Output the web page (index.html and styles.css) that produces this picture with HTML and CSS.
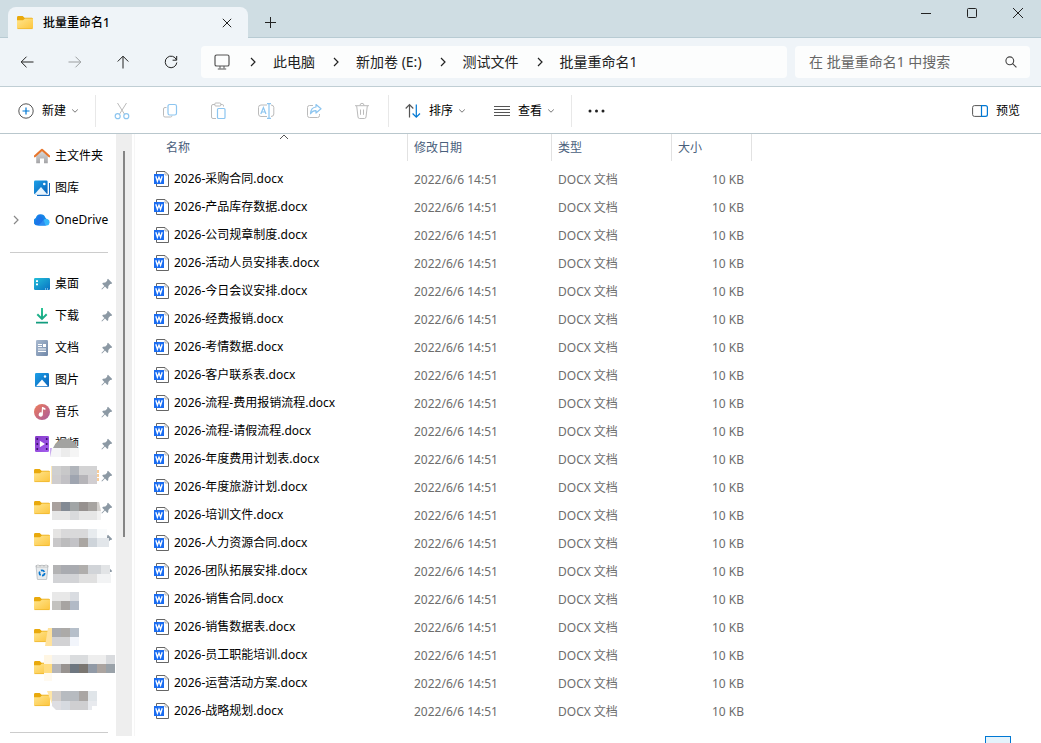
FILE: index.html
```html
<!DOCTYPE html>
<html lang="zh-CN">
<head>
    <meta charset="UTF-8">
    <meta name="viewport" content="width=device-width, initial-scale=1.0">
    <title>批量重命名1</title>
    <link rel="stylesheet" href="styles.css">
</head>
<body>
    <!-- Shared icons -->
    <svg class="defs" aria-hidden="true">
        <defs>
            <linearGradient id="g-folder" x1="0" y1="0" x2="1" y2="1"><stop offset="0" stop-color="#ffe58e"/><stop offset="1" stop-color="#fcc53d"/></linearGradient>
            <linearGradient id="g-blue" x1="0" y1="0" x2="1" y2="1"><stop offset="0" stop-color="#1ca0e8"/><stop offset="1" stop-color="#0b62b8"/></linearGradient>
            <linearGradient id="g-desk" x1="0" y1="0" x2="1" y2="1"><stop offset="0" stop-color="#23bfd9"/><stop offset="1" stop-color="#0871c3"/></linearGradient>
            <linearGradient id="g-home" x1="0" y1="0" x2="0" y2="1"><stop offset="0" stop-color="#dedede"/><stop offset="1" stop-color="#a3a3a6"/></linearGradient>
            <linearGradient id="g-doc" x1="0" y1="0" x2="1" y2="1"><stop offset="0" stop-color="#a9bad0"/><stop offset="1" stop-color="#6f87a8"/></linearGradient>
            <linearGradient id="g-music" x1="0" y1="0" x2="1" y2="1"><stop offset="0" stop-color="#ee7d5a"/><stop offset="1" stop-color="#a95a9d"/></linearGradient>
            <linearGradient id="g-video" x1="0" y1="0" x2="1" y2="1"><stop offset="0" stop-color="#8438c8"/><stop offset="1" stop-color="#a660f0"/></linearGradient>
            <linearGradient id="g-down" x1="0" y1="0" x2="0" y2="1"><stop offset="0" stop-color="#2cc596"/><stop offset="1" stop-color="#109a7d"/></linearGradient>
        </defs>
        <symbol id="folder" viewBox="0 0 16 16">
            <path d="M0 2.4Q0 1 1.4 1H5.7L7.5 2.7H14.6Q16 2.7 16 4V8H0Z" fill="#e9a90c"/>
            <path d="M0 5.2H6L8 3.4H16V12.7Q16 14 14.7 14H1.3Q0 14 0 12.7Z" fill="url(#g-folder)"/>
            <path d="M.5 13.6H15.5" stroke="#eeb52a" stroke-width=".7"/>
        </symbol>
        <symbol id="word" viewBox="0 0 15 16">
            <path d="M2.5.5H11L14.5 4V15.5H2.5Z" fill="#fff" stroke="#666" stroke-width="1"/>
            <path d="M11 .8V4H14.3" fill="none" stroke="#888" stroke-width=".6"/>
            <path d="M0 3H10V13H0Z" fill="#1a6cf0"/>
            <path d="M1.8 5.2L3.4 10.3L5 6L6.6 10.3L8.2 5.2" fill="none" stroke="#fff" stroke-width="1.3"/>
        </symbol>
        <symbol id="pin" viewBox="0 0 12 12">
            <path d="M7 .8L11.2 5L10.3 6L9.2 5.9L7.4 7.9L7.2 10.2L6.3 10.9L4 8.6L1 11.6L.4 11L3.4 8L1.2 5.7L2 4.8L4.3 4.6L6.2 2.8L6.1 1.7Z" fill="#8c99a4"/>
        </symbol>
        <symbol id="caret" viewBox="0 0 8 8">
            <path d="M1.2 2.5L4 5.2L6.8 2.5" fill="none" stroke="#777" stroke-width="1"/>
        </symbol>
        <symbol id="next" viewBox="0 0 8 10">
            <path d="M2 1L6 5L2 9" fill="none" stroke="currentColor" stroke-width="1.2"/>
        </symbol>
    </svg>

    <header class="title-bar">
        <div class="tab">
            <svg class="icon"><use href="#folder"/></svg>
            <h1>批量重命名1</h1>
            <button class="tab-close" aria-label="关闭标签页"><svg width="10" height="10" viewBox="0 0 10 10"><path d="M.8.8L9.2 9.2M9.2.8L.8 9.2"/></svg></button>
        </div>
        <button class="tab-new" aria-label="新标签页"><svg width="11" height="11" viewBox="0 0 11 11"><path d="M5.5 0V11M0 5.5H11"/></svg></button>
        <div class="window-controls">
            <button aria-label="最小化"><svg width="10" height="10" viewBox="0 0 10 10"><path d="M0 5.5H10"/></svg></button>
            <button aria-label="最大化"><svg width="10" height="10" viewBox="0 0 10 10"><rect x=".5" y=".5" width="9" height="9" rx="1"/></svg></button>
            <button aria-label="关闭"><svg width="10" height="10" viewBox="0 0 10 10"><path d="M0 0L10 10M10 0L0 10"/></svg></button>
        </div>
    </header>

    <nav class="nav-bar">
        <div class="nav-buttons">
            <button aria-label="后退"><svg width="14" height="14" viewBox="0 0 14 14"><path d="M13.5 7H1.2M6.5 1.7L1.2 7L6.5 12.3"/></svg></button>
            <button aria-label="前进" disabled><svg width="14" height="14" viewBox="0 0 14 14"><path d="M.5 7H12.8M7.5 1.7L12.8 7L7.5 12.3"/></svg></button>
            <button aria-label="向上"><svg width="14" height="14" viewBox="0 0 14 14"><path d="M7 13.5V1.2M1.7 6.5L7 1.2L12.3 6.5"/></svg></button>
            <button aria-label="刷新"><svg width="14" height="14" viewBox="0 0 14 14"><path d="M12.5 5A5.8 5.8 0 1 0 12.8 7.5M12.7 1V5.2H8.6"/></svg></button>
        </div>
        <div class="address">
            <svg class="device" viewBox="0 0 16 16" fill="none" stroke="#555"><rect x="1" y="1" width="14" height="11" rx="1.6" stroke-width="1.2"/><path d="M6 12V14.5M10 12V14.5M3.8 15H12.2"/></svg>
            <svg class="next"><use href="#next"/></svg>
            <a href="#">此电脑</a>
            <svg class="next"><use href="#next"/></svg>
            <a href="#">新加卷 (E:)</a>
            <svg class="next"><use href="#next"/></svg>
            <a href="#">测试文件</a>
            <svg class="next"><use href="#next"/></svg>
            <a href="#">批量重命名1</a>
        </div>
        <div class="search">
            <input type="text" aria-label="搜索" placeholder="在 批量重命名1 中搜索">
            <svg width="12" height="12" viewBox="0 0 12 12" fill="none" stroke="#444" stroke-width="1.1"><circle cx="4.8" cy="4.8" r="3.9"/><path d="M7.6 7.6L11.4 11.4"/></svg>
        </div>
    </nav>

    <div class="toolbar">
        <button class="labelled">
            <svg width="16" height="16" viewBox="0 0 16 16" fill="none"><circle cx="8" cy="8" r="7.2" stroke="#555"/><path d="M8 4.5V11.5M4.5 8H11.5" stroke="#0078d4" stroke-width="1.2"/></svg>
            <span>新建</span>
            <svg class="caret"><use href="#caret"/></svg>
        </button>
        <div class="group">
            <button aria-label="剪切" disabled><svg width="16" height="18" viewBox="0 0 16 18" fill="none" stroke="#bbb"><path d="M3.5 1L10.6 12.3M12.5 1L5.4 12.3"/><g stroke="#8cc5f0" stroke-width="1.2"><circle cx="3.7" cy="14.2" r="2.5"/><circle cx="12.3" cy="14.2" r="2.5"/></g></svg></button>
            <button aria-label="复制" disabled><svg width="16" height="16" viewBox="0 0 16 16" fill="none" stroke="#bbb"><path d="M4.5 4.5H3Q1.5 4.5 1.5 6V12.5Q1.5 14 3 14H8.5Q10 14 10 12.5"/><rect x="6" y="1.5" width="8.5" height="10.5" rx="1.8" stroke="#8cc5f0" stroke-width="1.2"/></svg></button>
            <button aria-label="粘贴" disabled><svg width="16" height="18" viewBox="0 0 16 18" fill="none" stroke="#bbb"><path d="M5 2.5H3Q1.5 2.5 1.5 4V15Q1.5 16.5 3 16.5H6M11 2.5H12.5Q13.5 2.5 13.5 4V4.5"/><rect x="4.8" y="1" width="6" height="3" rx="1"/><rect x="7.5" y="6.5" width="7.5" height="10" rx="1" stroke="#8cc5f0" stroke-width="1.2"/></svg></button>
            <button aria-label="重命名" disabled><svg width="18" height="16" viewBox="0 0 18 16" fill="none" stroke="#bbb"><path d="M10 2H4Q1.5 2 1.5 4.5V11Q1.5 13.5 4 13.5H10M14 2Q16.8 2 16.8 4.5V11Q16.8 13.5 14 13.5"/><g stroke="#8cc5f0" stroke-width="1.2"><path d="M12 .7V15.3M10 .7H14M10 15.3H14"/><path d="M3.8 11L6.4 4.5L9 11M4.6 9H8.2"/></g></svg></button>
            <button aria-label="共享" disabled><svg width="16" height="16" viewBox="0 0 16 16" fill="none" stroke="#bbb"><path d="M7 2.5H3.5Q1.5 2.5 1.5 4.5V12.5Q1.5 14.5 3.5 14.5H11.5Q13.5 14.5 13.5 12.5V11"/><path d="M10 1.5L15 5.8L10 10V7.7Q6.5 7.5 4.5 10.8Q4.8 4.5 10 4Z" stroke="#8cc5f0" stroke-width="1.2" stroke-linejoin="round"/></svg></button>
            <button aria-label="删除" disabled><svg width="16" height="18" viewBox="0 0 16 18" fill="none" stroke="#bbb"><path d="M1 3.7H15M6 3.5Q6 1.3 8 1.3T10 3.5M2.7 4L4 15Q4.2 16.5 5.5 16.5H10.5Q11.8 16.5 12 15L13.3 4M6.5 7.5V12.8M9.5 7.5V12.8"/></svg></button>
        </div>
        <button class="labelled">
            <svg width="16" height="16" viewBox="0 0 16 16" fill="none" stroke-width="1.2"><path d="M4.5 14.5V2M.7 5.5L4.5 1.7L8.3 5.5" stroke="#555"/><path d="M11.3 1.5V14M7.6 10.5L11.3 14.2L15 10.5" stroke="#0078d4"/></svg>
            <span>排序</span>
            <svg class="caret"><use href="#caret"/></svg>
        </button>
        <button class="labelled view">
            <svg width="16" height="16" viewBox="0 0 16 16" stroke="#555"><path d="M0 3.5H16M0 6.5H16M0 9.5H16M0 12.5H16"/></svg>
            <span>查看</span>
            <svg class="caret"><use href="#caret"/></svg>
        </button>
        <button class="more" aria-label="更多"><svg width="17" height="4" viewBox="0 0 17 4" fill="#222"><circle cx="2" cy="2" r="1.5"/><circle cx="8.5" cy="2" r="1.5"/><circle cx="15" cy="2" r="1.5"/></svg></button>
        <button class="labelled preview">
            <svg width="16" height="12" viewBox="0 0 16 12" fill="none"><path d="M9.5.6H2.5Q.6.6.6 2.5V9.5Q.6 11.4 2.5 11.4H9.5" stroke="#555"/><path d="M9.5.6H13.5Q15.4.6 15.4 2.5V9.5Q15.4 11.4 13.5 11.4H9.5Z" stroke="#0078d4" stroke-width="1.2"/></svg>
            <span>预览</span>
        </button>
    </div>

    <div class="content">
        <aside class="sidebar">
            <ul>
                <li><svg class="icon" viewBox="0 0 16 16"><path d="M2.2 7L8 2L13.8 7V15.3H10V10.5H6V15.3H2.2Z" fill="url(#g-home)"/><path d="M.8 8.3L8 1.8L15.2 8.3" fill="none" stroke="#e8762c" stroke-width="2.1" stroke-linecap="round" stroke-linejoin="round"/></svg><a href="#">主文件夹</a></li>
                <li><svg class="icon" viewBox="0 0 16 16"><path d="M3 15.6H14Q15.6 15.6 15.6 14V3" fill="none" stroke="#1369bd" stroke-width="1.2"/><rect y=".5" width="13.6" height="13.8" rx="1.2" fill="url(#g-blue)"/><path d="M.8 14L7 7L13 14Z" fill="#eaf5fd"/><circle cx="10.3" cy="4" r="1.3" fill="#fff"/></svg><a href="#">图库</a></li>
                <li><svg class="expand"><use href="#next"/></svg><svg class="icon" viewBox="0 0 16 16"><path d="M4 13.4A3.9 3.9 0 0 1 1.8 6A5 5 0 0 1 11.3 5.4L14.5 10L12 13.4Z" fill="#1686e8"/><path d="M4 13.4Q7 12 9 8.5Q11 5.8 13.4 7A3.3 3.3 0 0 1 12.8 13.4Z" fill="#35b6fb"/><path d="M5 3Q9 4 11.5 13.4H5Q1.5 13 1 11Q3 7 5 3Z" fill="#2464e8" opacity=".5"/></svg><a href="#">OneDrive</a></li>
            </ul>
            <hr>
            <ul>
                <li><svg class="icon" viewBox="0 0 16 16"><rect y="2" width="16" height="12" rx="1.2" fill="url(#g-desk)"/><path d="M2 4.2H4V6H2ZM2 7.5H4V9.3H2Z" fill="#fff"/><path d="M11 13H15" stroke="#d5efff" stroke-dasharray="1 1"/></svg><a href="#">桌面</a><svg class="pin"><use href="#pin"/></svg></li>
                <li><svg class="icon" viewBox="0 0 16 16"><path d="M7 0H9V8.5L12 5.5L13.4 6.9L8 12.2L2.6 6.9L4 5.5L7 8.5ZM2 13.8H14V15.6H2Z" fill="url(#g-down)"/></svg><a href="#">下载</a><svg class="pin"><use href="#pin"/></svg></li>
                <li><svg class="icon" viewBox="0 0 16 16"><rect x="2" y="0" width="12" height="16" rx="1.2" fill="url(#g-doc)"/><path d="M4 4.5H8M4 6.5H8M4 9H12M4 11.3H12" stroke="#fff" stroke-width="1.2"/><path d="M9 4H12V7H9Z" fill="#fff"/></svg><a href="#">文档</a><svg class="pin"><use href="#pin"/></svg></li>
                <li><svg class="icon" viewBox="0 0 16 16"><rect x="1" y="1" width="14" height="14" rx="1.2" fill="url(#g-blue)"/><path d="M2 14.2L8 7.5L14 14.2Z" fill="#fff"/><circle cx="11" cy="4.5" r="1.2" fill="#fff"/></svg><a href="#">图片</a><svg class="pin"><use href="#pin"/></svg></li>
                <li><svg class="icon" viewBox="0 0 16 16"><circle cx="8" cy="8" r="8" fill="url(#g-music)"/><path d="M8 3H8.8L11.4 4.2V6L8.9 5.2V10.5A2.1 2.1 0 1 1 7.6 8.6Z" fill="#fff"/></svg><a href="#">音乐</a><svg class="pin"><use href="#pin"/></svg></li>
                <li><svg class="icon" viewBox="0 0 16 16"><rect x="1" y="0" width="14" height="16" rx="1.2" fill="url(#g-video)"/><path d="M3.3 2V15M12.7 2V15" stroke="#3d1272" stroke-width="1.6" stroke-dasharray="2 3"/><path d="M5.8 4.8L11 8L5.8 11.2Z" fill="#fff"/></svg><a href="#">视频</a><svg class="pin"><use href="#pin"/></svg>
                    <svg class="mosaic" viewBox="0 0 72 32"><path d="M9 20Q13 11 21 10.5Q30 11 34 20Z" fill="#a3a3a1"/><path d="M6 20H17V29H6Z" fill="#f5f5f7"/><path d="M17 20H26V29H17Z" fill="#ececec"/><path d="M26 20H35V29H26Z" fill="#f5f5f5"/><path d="M6 20H8L6 29Z" fill="#c8a7ee"/></svg></li>
                <li><svg class="icon"><use href="#folder"/></svg><svg class="pin"><use href="#pin"/></svg>
                    <svg class="mosaic" viewBox="0 0 72 32"><path d="M7 6H8V24H7Z" fill="#ffeab6"/><path d="M8 6H17V15H8Z" fill="#d0d0d0"/><path d="M17 6H26V15H17Z" fill="#c8c8c9"/><path d="M26 6H35V15H26Z" fill="#b1b5bb"/><path d="M35 6H53V15H35Z" fill="#d3d3d4"/><path d="M8 15H17V24H8Z" fill="#cfcdce"/><path d="M17 15H26V24H17Z" fill="#c2c1c5"/><path d="M26 15H35V24H26Z" fill="#9fa5b0"/><path d="M35 15H44V24H35Z" fill="#b6b5b9"/><path d="M44 15H53V24H44Z" fill="#d1ced1"/><path d="M54 10V22" stroke="#f09a35" stroke-dasharray="3 1"/></svg></li>
                <li><svg class="icon"><use href="#folder"/></svg><svg class="pin"><use href="#pin"/></svg>
                    <svg class="mosaic" viewBox="0 0 72 32"><path d="M8 10H17V19H8Z" fill="#a9a19e"/><path d="M17 10H26V19H17Z" fill="#838a94"/><path d="M26 10H35V19H26Z" fill="#a1a5a6"/><path d="M35 10H44V19H35Z" fill="#96918f"/><path d="M44 10H53V19H44Z" fill="#a7a4a1"/><path d="M53 10H55L57 19H53Z" fill="#d4d1ce"/><path d="M8 19H53V28H8Z" fill="#e6e6e6"/><path d="M26 19H35V28H26Z" fill="#d9dadc"/><path d="M53 19H57V28H53Z" fill="#f2f2f2"/></svg></li>
                <li><svg class="icon"><use href="#folder"/></svg><svg class="pin"><use href="#pin"/></svg>
                    <svg class="mosaic" viewBox="0 0 72 32"><path d="M9 5H17V14H9Z" fill="#e5e4e3"/><path d="M17 5H44V14H17Z" fill="#d9d9da"/><path d="M44 5H53V14H44Z" fill="#e7ebee"/><path d="M53 5H63V14H53Z" fill="#f8fafb"/><path d="M9 14H17V23H9Z" fill="#c9c8c9"/><path d="M17 14H26V23H17Z" fill="#bcbcbd"/><path d="M26 14H35V23H26Z" fill="#c3c3c7"/><path d="M35 14H44V23H35Z" fill="#aaa6a2"/><path d="M44 14H53V23H44Z" fill="#ced4da"/><path d="M53 14H65V23H53Z" fill="#e2e6ea"/></svg></li>
                <li><svg class="icon" viewBox="0 0 16 16"><path d="M2 1.5L14 1.5L12.7 15Q12.6 15.6 12 15.6H4Q3.4 15.6 3.3 15Z" fill="#e8ebed" stroke="#b4babf" stroke-width=".8"/><path d="M2.2 2L4 .8L6 2.2L8 1L10 2.2L12 .8L13.8 2V3H2.3Z" fill="#f8f9f9" stroke="#999" stroke-width=".5"/><circle cx="8" cy="9" r="2.6" fill="none" stroke="#0878d0" stroke-width="1.7" stroke-dasharray="4 1.4"/></svg><svg class="pin"><use href="#pin"/></svg>
                    <svg class="mosaic" viewBox="0 0 72 32"><path d="M9 9H17V18H9Z" fill="#b3b3b4"/><path d="M17 9H35V18H17Z" fill="#a9abb0"/><path d="M35 9H44V18H35Z" fill="#b0aeac"/><path d="M44 9H57V18H44Z" fill="#d1d4d8"/><path d="M57 9H66V18H57Z" fill="#e2e4e6"/><path d="M9 18H35V27H9Z" fill="#d2d3d6"/><path d="M35 18H53V27H35Z" fill="#e0e0e0"/><path d="M53 18H67V27H53Z" fill="#f2f3f4"/></svg></li>
                <li><svg class="icon"><use href="#folder"/></svg>
                    <svg class="mosaic" viewBox="0 0 72 32"><path d="M8 4H26V13H8Z" fill="#e8e8e8"/><path d="M26 4H35V13H26Z" fill="#d9dce1"/><path d="M8 13H17V22H8Z" fill="#c3c2bf"/><path d="M17 13H26V22H17Z" fill="#a7a4a2"/><path d="M26 13H35V22H26Z" fill="#b2bac6"/></svg></li>
                <li><svg class="icon"><use href="#folder"/></svg>
                    <svg class="mosaic" viewBox="0 0 72 32"><path d="M4 8H8V26H1Z" fill="#ffe29c"/><path d="M8 8H17V17H8Z" fill="#a9abb0"/><path d="M17 8H26V17H17Z" fill="#acaaa8"/><path d="M26 8H35V17H26Z" fill="#b6bfca"/><path d="M8 17H26V26H8Z" fill="#d2d2d4"/><path d="M26 17H35V26H26Z" fill="#f2f5fb"/></svg></li>
                <li><svg class="icon"><use href="#folder"/></svg>
                    <svg class="mosaic" viewBox="0 0 72 32"><path d="M0 3H8V12H0Z" fill="#fff6e3"/><path d="M0 12H8V21H0Z" fill="#ffdc80"/><path d="M0 21H8V29H0Z" fill="#fffaf0"/><path d="M8 3H26V12H8Z" fill="#f0f0f0"/><path d="M26 3H44V12H26Z" fill="#dadcde"/><path d="M44 3H62V12H44Z" fill="#eee"/><path d="M62 3H71V12H62Z" fill="#d9dbde"/><path d="M8 12H17V21H8Z" fill="#b5b5b8"/><path d="M17 12H26V21H17Z" fill="#989390"/><path d="M26 12H35V21H26Z" fill="#6e7780"/><path d="M35 12H44V21H35Z" fill="#7a7671"/><path d="M44 12H53V21H44Z" fill="#919aa6"/><path d="M53 12H62V21H53Z" fill="#aba4a0"/><path d="M62 12H71V21H62Z" fill="#9aa2a9"/></svg></li>
                <li><svg class="icon"><use href="#folder"/></svg>
                    <svg class="mosaic" viewBox="0 0 72 32"><path d="M3 7H8V20Z" fill="#ffe6a8"/><path d="M8 7H17V17H8Z" fill="#d2cdca"/><path d="M17 7H35V17H17Z" fill="#b7bbc0"/><path d="M35 7H44V17H35Z" fill="#aaa6a4"/><path d="M44 7H53V17H44Z" fill="#e0e5e9"/><path d="M8 17H17V26H12L8 22Z" fill="#dedee2"/><path d="M17 17H26V26H17Z" fill="#d6dae0"/><path d="M26 17H44V26H26Z" fill="#cfcfd1"/><path d="M44 17H53V22H48V26H44Z" fill="#e8eaee"/></svg></li>
            </ul>
            <hr>
        </aside>
        <div class="scrollbar"><div class="thumb"></div></div>

        <main>
            <table>
                <colgroup><col class="col-name"><col class="col-date"><col class="col-type"><col class="col-size"></colgroup>
                <thead>
                    <tr><th>名称<svg class="sorted" viewBox="0 0 10 6"><path d="M1 5L5 1L9 5" fill="none" stroke="#555"/></svg></th><th>修改日期</th><th>类型</th><th>大小</th></tr>
                </thead>
                <tbody>
                    <tr><td><svg class="word"><use href="#word"/></svg>2026-采购合同.docx</td><td>2022/6/6 14:51</td><td>DOCX 文档</td><td>10 KB</td></tr>
                    <tr><td><svg class="word"><use href="#word"/></svg>2026-产品库存数据.docx</td><td>2022/6/6 14:51</td><td>DOCX 文档</td><td>10 KB</td></tr>
                    <tr><td><svg class="word"><use href="#word"/></svg>2026-公司规章制度.docx</td><td>2022/6/6 14:51</td><td>DOCX 文档</td><td>10 KB</td></tr>
                    <tr><td><svg class="word"><use href="#word"/></svg>2026-活动人员安排表.docx</td><td>2022/6/6 14:51</td><td>DOCX 文档</td><td>10 KB</td></tr>
                    <tr><td><svg class="word"><use href="#word"/></svg>2026-今日会议安排.docx</td><td>2022/6/6 14:51</td><td>DOCX 文档</td><td>10 KB</td></tr>
                    <tr><td><svg class="word"><use href="#word"/></svg>2026-经费报销.docx</td><td>2022/6/6 14:51</td><td>DOCX 文档</td><td>10 KB</td></tr>
                    <tr><td><svg class="word"><use href="#word"/></svg>2026-考情数据.docx</td><td>2022/6/6 14:51</td><td>DOCX 文档</td><td>10 KB</td></tr>
                    <tr><td><svg class="word"><use href="#word"/></svg>2026-客户联系表.docx</td><td>2022/6/6 14:51</td><td>DOCX 文档</td><td>10 KB</td></tr>
                    <tr><td><svg class="word"><use href="#word"/></svg>2026-流程-费用报销流程.docx</td><td>2022/6/6 14:51</td><td>DOCX 文档</td><td>10 KB</td></tr>
                    <tr><td><svg class="word"><use href="#word"/></svg>2026-流程-请假流程.docx</td><td>2022/6/6 14:51</td><td>DOCX 文档</td><td>10 KB</td></tr>
                    <tr><td><svg class="word"><use href="#word"/></svg>2026-年度费用计划表.docx</td><td>2022/6/6 14:51</td><td>DOCX 文档</td><td>10 KB</td></tr>
                    <tr><td><svg class="word"><use href="#word"/></svg>2026-年度旅游计划.docx</td><td>2022/6/6 14:51</td><td>DOCX 文档</td><td>10 KB</td></tr>
                    <tr><td><svg class="word"><use href="#word"/></svg>2026-培训文件.docx</td><td>2022/6/6 14:51</td><td>DOCX 文档</td><td>10 KB</td></tr>
                    <tr><td><svg class="word"><use href="#word"/></svg>2026-人力资源合同.docx</td><td>2022/6/6 14:51</td><td>DOCX 文档</td><td>10 KB</td></tr>
                    <tr><td><svg class="word"><use href="#word"/></svg>2026-团队拓展安排.docx</td><td>2022/6/6 14:51</td><td>DOCX 文档</td><td>10 KB</td></tr>
                    <tr><td><svg class="word"><use href="#word"/></svg>2026-销售合同.docx</td><td>2022/6/6 14:51</td><td>DOCX 文档</td><td>10 KB</td></tr>
                    <tr><td><svg class="word"><use href="#word"/></svg>2026-销售数据表.docx</td><td>2022/6/6 14:51</td><td>DOCX 文档</td><td>10 KB</td></tr>
                    <tr><td><svg class="word"><use href="#word"/></svg>2026-员工职能培训.docx</td><td>2022/6/6 14:51</td><td>DOCX 文档</td><td>10 KB</td></tr>
                    <tr><td><svg class="word"><use href="#word"/></svg>2026-运营活动方案.docx</td><td>2022/6/6 14:51</td><td>DOCX 文档</td><td>10 KB</td></tr>
                    <tr><td><svg class="word"><use href="#word"/></svg>2026-战略规划.docx</td><td>2022/6/6 14:51</td><td>DOCX 文档</td><td>10 KB</td></tr>
                </tbody>
            </table>
        </main>
    </div>

    <footer>
        <button class="view-toggle" aria-label="详细信息"></button>
    </footer>
</body>
</html>
```
FILE: styles.css
```css
* {
    margin: 0;
    padding: 0;
    box-sizing: border-box;
}

body {
    display: flex;
    flex-direction: column;
    height: 100vh;
    overflow: hidden;
    font-family: 'Noto Sans', 'Noto Sans CJK SC', sans-serif;
    font-size: 12px;
    line-height: 16px;
    color: #000;
    background: #fff;
}

button {
    display: flex;
    align-items: center;
    justify-content: center;
    border: none;
    background: none;
    font: inherit;
    color: inherit;
}

svg {
    display: block;
    flex-shrink: 0;
}

a {
    color: inherit;
    text-decoration: none;
    white-space: nowrap;
}

.defs {
    position: absolute;
    width: 0;
    height: 0;
}

.icon {
    width: 16px;
    height: 16px;
}

/* Title bar */
.title-bar {
    display: flex;
    flex-shrink: 0;
    height: 38px;
    padding-left: 8px;
    background: #cfdde3;
    box-shadow: inset 0 -1px #b8cbd3;
}

.title-bar button svg,
.nav-buttons svg {
    fill: none;
    stroke: #222;
}

.tab {
    display: flex;
    align-items: center;
    width: 240px;
    margin-top: 7px;
    padding: 0 16px 0 9px;
    border-radius: 8px 8px 0 0;
    background: #eff4f8;
}

.tab h1 {
    flex: 1;
    margin-left: 10px;
    font-size: 12px;
    font-weight: 500;
}

.tab-new {
    width: 44px;
    padding-top: 7px;
}

.window-controls {
    display: flex;
    height: 26px;
    margin-left: auto;
}

.window-controls button {
    width: 46px;
}

/* Navigation bar */
.nav-bar {
    display: flex;
    flex-shrink: 0;
    height: 49px;
    padding: 8px 11px 8px 3px;
    border-bottom: 1px solid #c0ced4;
    background: #eff4f8;
}

.nav-buttons {
    display: flex;
    margin-right: 6px;
}

.nav-buttons button {
    width: 48px;
}

.nav-buttons button:disabled {
    opacity: 0.4;
}

.address,
.search {
    display: flex;
    align-items: center;
    border-radius: 4px;
    background: #fcfdfd;
    font-size: 14px;
}

.address {
    flex: 1;
    margin-right: 8px;
    padding-left: 13px;
    color: #222;
}

.device {
    width: 16px;
    height: 16px;
    margin-right: 3px;
}

.next {
    width: 8px;
    height: 10px;
    margin: 0 16px 0 17px;
}

.device + .next {
    margin-left: 16px;
}

.search {
    width: 235px;
    padding: 0 13px 0 14px;
}

.search input {
    flex: 1;
    min-width: 0;
    border: none;
    outline: none;
    background: none;
    font: inherit;
}

.search input::placeholder {
    color: #666;
}

/* Toolbar */
.toolbar {
    display: flex;
    flex-shrink: 0;
    align-items: center;
    height: 47px;
    padding: 2px 21px 0 18px;
    border-bottom: 1px solid #b9c7cd;
}

.labelled span {
    margin: 0 5px 0 8px;
}

.caret {
    width: 8px;
    height: 8px;
}

.group {
    display: flex;
    margin: 0 16px;
    padding: 0 2px;
    border: solid #e8e8e8;
    border-width: 0 1px;
}

.group button {
    width: 48px;
    height: 32px;
}

.view {
    margin: 0 16px 0 28px;
}

.more {
    width: 50px;
    height: 32px;
    border-left: 1px solid #e8e8e8;
}

.preview {
    margin-left: auto;
}

.preview span {
    margin-right: 0;
}

/* Content */
.content {
    display: flex;
    flex: 1;
    min-height: 0;
    overflow: hidden;
}

.sidebar {
    width: 116px;
    padding-top: 6px;
    overflow: hidden;
}

.sidebar ul {
    list-style: none;
}

.sidebar li {
    position: relative;
    display: flex;
    align-items: center;
    height: 32px;
    padding: 0 3px 0 34px;
}

.sidebar li a {
    margin-left: 5px;
}

.sidebar hr {
    height: 1px;
    margin: 16px 8px 15px 10px;
    border: none;
    background: #ccc;
}

.expand {
    position: absolute;
    left: 12px;
    width: 8px;
    height: 10px;
    color: #888;
}

.pin {
    width: 12px;
    height: 12px;
    margin-left: auto;
}

.mosaic {
    position: absolute;
    top: 0;
    left: 44px;
    width: 72px;
    height: 32px;
}

.scrollbar {
    width: 16px;
    padding: 17px 7px 0;
    background: #eee;
}

.thumb {
    width: 2px;
    height: 66%;
    background: #858585;
}

main {
    flex: 1;
    margin-left: 2px;
    border-left: 1px solid #f6f6f6;
}

/* File list */
table {
    table-layout: fixed;
    width: 617px;
    border-collapse: separate;
    border-spacing: 0;
}

.col-name {
    width: 273px;
}

.col-date {
    width: 144px;
}

.col-type {
    width: 120px;
}

.col-size {
    width: 80px;
}

th {
    position: relative;
    height: 27px;
    padding-left: 6px;
    border-right: 1px solid #e2e2e2;
    font-weight: 400;
    text-align: left;
    color: #4a607c;
}

th:first-child {
    padding-left: 31px;
}

.sorted {
    position: absolute;
    top: 0;
    left: 144px;
    width: 10px;
    height: 6px;
}

tbody::before {
    content: '';
    display: block;
    height: 5px;
}

td {
    height: 28px;
    padding-left: 6px;
    color: #6d6d6d;
    white-space: nowrap;
}

td:first-child {
    padding-left: 19px;
    color: #000;
}

td:last-child {
    padding-right: 8px;
    text-align: right;
}

.word {
    display: inline-block;
    width: 15px;
    height: 16px;
    margin: 0 5px 2px 0;
    vertical-align: middle;
}

/* Status bar */
footer {
    display: flex;
    flex: 0 0 7px;
    justify-content: flex-end;
    padding-right: 30px;
    overflow: hidden;
}

.view-toggle {
    width: 26px;
    height: 22px;
    border: 1px solid #0078d4;
    background: #e5f3fb;
}
```
